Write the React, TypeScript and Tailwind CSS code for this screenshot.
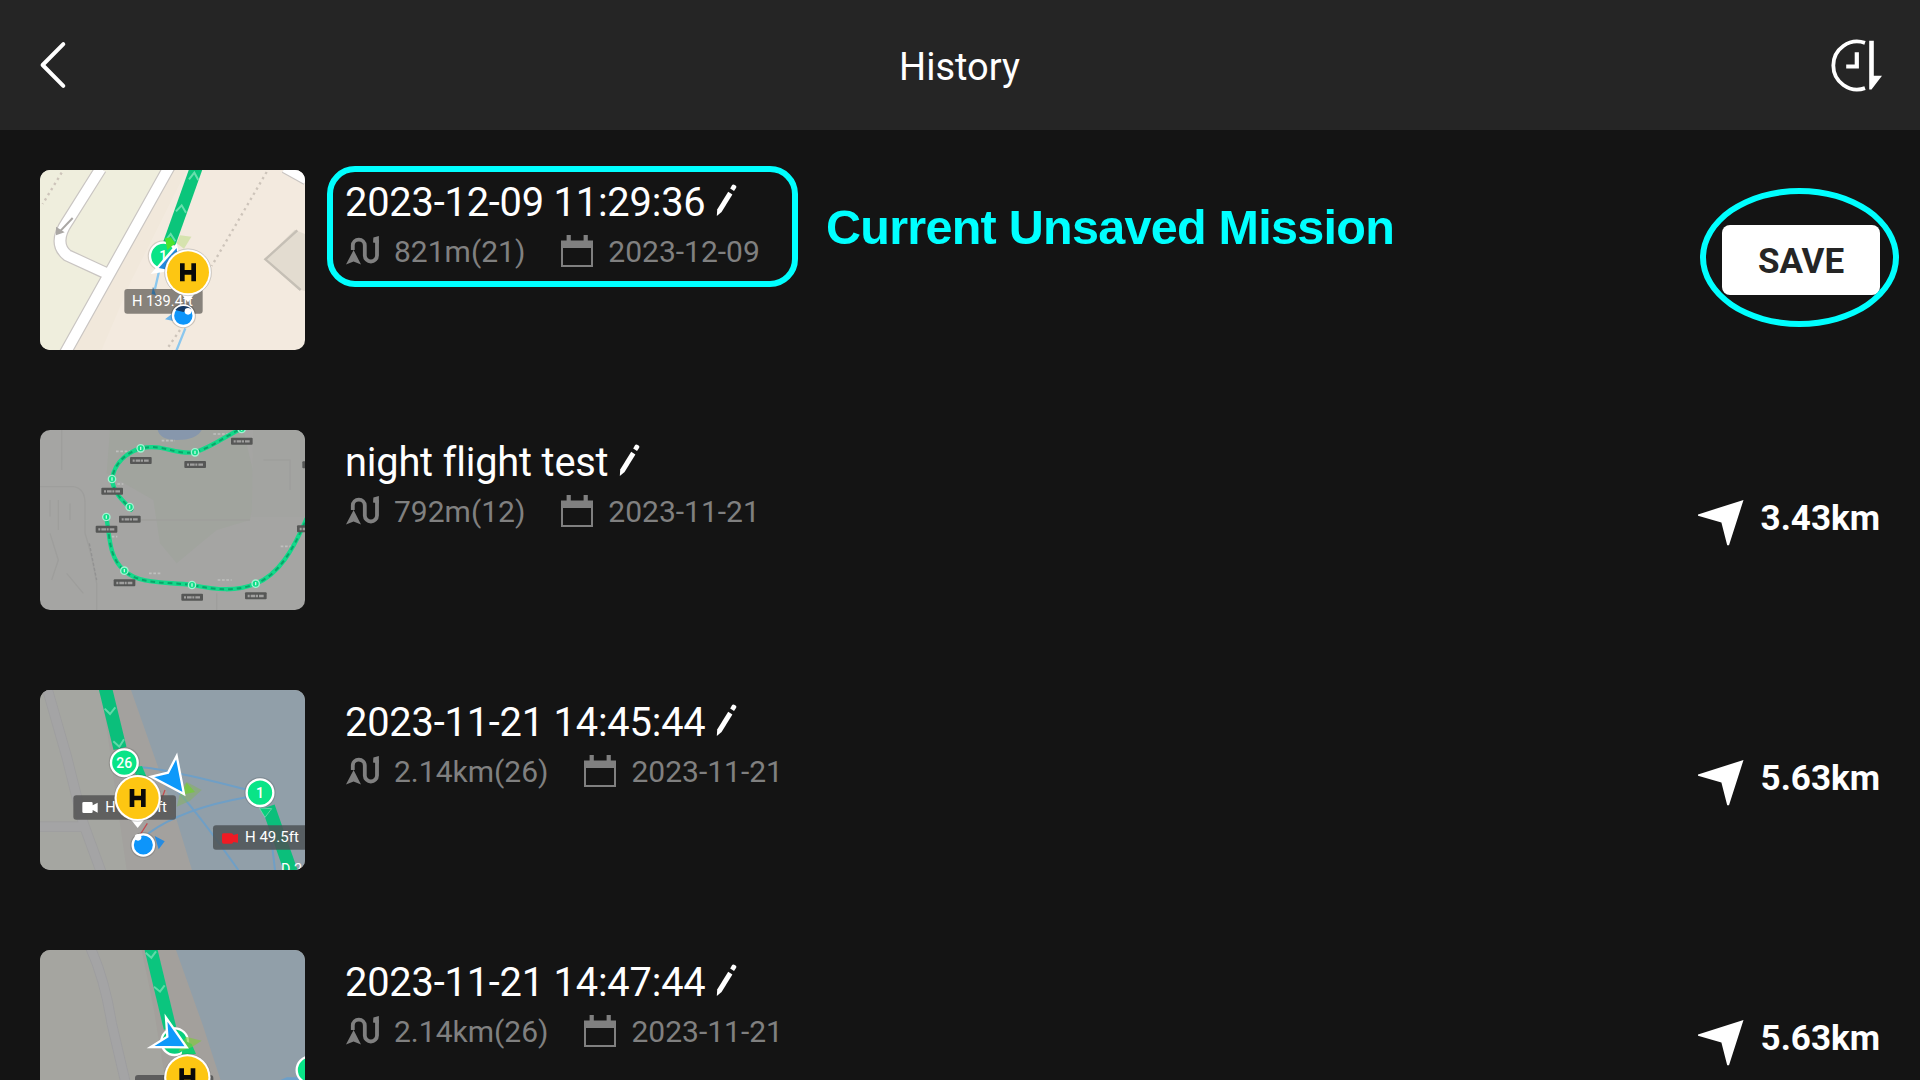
import type { ReactNode } from "react";

type Mission = {
  name: string;
  length: string;
  date: string;
  distance?: string;
  unsaved?: boolean;
  map: ReactNode;
};

function BackIcon() {
  return (
    <svg className="h-12 w-7" viewBox="0 0 28 48" fill="none">
      <path
        d="M24.3 3.2 3.6 24l20.7 20.8"
        stroke="#fff"
        strokeWidth="4"
        strokeLinecap="round"
        strokeLinejoin="round"
      />
    </svg>
  );
}

function HistorySortIcon() {
  return (
    <svg className="h-[54px] w-[52px]" viewBox="0 0 52 54" fill="none">
      <path
        d="M35 4.9A23.9 23.9 0 1 0 35 50.1"
        stroke="#fff"
        strokeWidth="3.8"
      />
      <path d="M26.8 14.3v14.2H16.2" stroke="#fff" strokeWidth="4.2" />
      <path d="M39.2 2.7h4.6v35.1h8.2L41.5 51.6h-2.3z" fill="#fff" />
    </svg>
  );
}

function PencilIcon() {
  return (
    <svg className="h-8 w-[22px]" viewBox="0 0 22 32" fill="#fff">
      <path d="M12.2 7.8 16.4 10.4 5.6 28 .8 32 1.2 25.4z" />
      <path d="M14.2 4.6 16 1.2Q16.8 0 18.2 .7L19.6 1.6Q20.8 2.5 20.2 3.8L18 6.9z" />
    </svg>
  );
}

function RouteIcon() {
  return (
    <svg className="h-[29px] w-[34px]" viewBox="0 0 34 29" fill="none">
      <path
        d="M6.8 14V9.6a6 6 0 0 1 12 0V19.4a6 6 0 0 0 12.2 0V4"
        stroke="#808080"
        strokeWidth="3.8"
      />
      <path d="M27.4 1.6 32.9 0v7.6L27 6.4z" fill="#808080" />
      <path d="M7.6 14 15 28.6 7.6 25.6 0 28.6z" fill="#808080" />
    </svg>
  );
}

function CalendarIcon() {
  return (
    <svg className="h-8 w-8" viewBox="0 0 32 32" fill="none">
      <path d="M0 5.4h5.6V0h4.2v5.4h12.8V0h4.2v5.4H32V13H0z" fill="#808080" />
      <path d="M1 12v19h30V12" stroke="#808080" strokeWidth="2" />
    </svg>
  );
}

function NavigateIcon() {
  return (
    <svg className="h-[46px] w-[46px]" viewBox="0 0 46 46" fill="#fff">
      <path d="M45.5 0 31 45.2H29.2L23.4 22.4 0 15.8V14.4z" />
    </svg>
  );
}

function Thumb({ children }: { children: ReactNode }) {
  return (
    <svg
      className="h-[180px] w-[265px] shrink-0 rounded-[10px]"
      viewBox="30 30 795 540"
      fontFamily="Roboto, sans-serif"
      fill="none"
    >
      {children}
    </svg>
  );
}

function HomePin({ x, y }: { x: number; y: number }) {
  return (
    <g>
      <path d={`M${x - 24} ${y + 60}L${x} ${y + 90}L${x + 24} ${y + 60}z`} fill="#fff" />
      <circle cx={x} cy={y} r="70" fill="#fff" stroke="#00000030" strokeWidth="3" />
      <circle cx={x} cy={y} r="63" fill="#fdc612" />
      <path
        d={`M${x - 17} ${y - 27}V${y + 27}M${x + 17} ${y - 27}V${y + 27}M${x - 17} ${y}H${x + 17}`}
        stroke="#0a0a0a"
        strokeWidth="14"
      />
    </g>
  );
}

function Waypoint({ x, y, label }: { x: number; y: number; label: string }) {
  return (
    <g>
      <circle cx={x} cy={y} r="47" fill="#0000001f" />
      <circle cx={x} cy={y} r="40" fill="#09e487" stroke="#fff" strokeWidth="7" />
      <text x={x} y={y + 15} fontSize="42" fontWeight="500" fill="#fff" textAnchor="middle">
        {label}
      </text>
    </g>
  );
}

function FirstMap() {
  return (
    <Thumb>
      <rect x="30" y="30" width="795" height="540" fill="#f3eadf" />
      <path d="M30 30H400L215 350 100 570H30z" fill="#efeedd" />
      <path d="M430 30H470L300 370 215 570H110z" fill="#f1e8db" />
      <path
        d="M212 26 112 185Q68 250 112 286L225 338M418 20 105 580M765 22 830 58"
        stroke="#c9c5c2"
        strokeWidth="38"
      />
      <path
        d="M212 26 112 185Q68 250 112 286L230 340M418 20 105 580M765 22 830 58"
        stroke="#fff"
        strokeWidth="31"
      />
      <path d="M128 174 92 212" stroke="#aaa7a4" strokeWidth="6" />
      <path d="M78 200V226L104 217z" fill="#aaa7a4" />
      <path
        d="M95 38 38 132M710 36 545 318M450 510 410 568"
        stroke="#cdc4ba"
        strokeWidth="7"
        strokeDasharray="7 11"
      />
      <path d="M704 298 794 209 825 222V393L804 388z" fill="#e3dcd0" />
      <path d="M802 211 706 298 812 390" stroke="#c5bfb5" strokeWidth="7" />
      <path d="M500 20 418 250" stroke="#0bc57b" strokeWidth="38" />
      <path
        d="M477 58 493 38 505 60M438 154 455 136 468 158M408 240 422 222 436 244"
        stroke="#68dfae"
        strokeWidth="6"
      />
      <path d="M440 250 450 226 484 230 462 266z" fill="#b9dc7e" opacity=".5" />
      <path d="M388 330 372 400M466 505 438 575" stroke="#8bc7ee" strokeWidth="7" />
      <Waypoint x={400} y={288} label="1" />
      <path d="M405 235 422 232 436 250 412 270z" fill="#4de32c" />
      <path d="M362 342 440 250 452 300 405 335z" fill="#fff" />
      <path d="M386 324 440 264 444 300 405 328z" fill="#2389dc" />
      <rect x="283" y="387" width="235" height="74" rx="9" fill="#77736d" opacity=".88" />
      <path d="M369 380 365 402 378 406z" fill="#356e9b" />
      <text x="306" y="438" fontSize="44" fill="#fff">
        H 139.4ft
      </text>
      <path d="M405 478 430 458 434 484z" fill="#67b3ec" />
      <circle cx="460" cy="467" r="38" fill="#0000002b" />
      <circle cx="460" cy="467" r="31" fill="#0d95fa" stroke="#fff" strokeWidth="7" />
      <path d="M436 450A32 32 0 0 1 484 448L460 456z" fill="#163c68" />
      <circle cx="474" cy="454" r="10" fill="#fff" />
      <HomePin x={474} y={337} />
    </Thumb>
  );
}

const NIGHT_POINTS = [
  [332, 85],
  [495, 97],
  [635, 27],
  [246, 177],
  [299, 261],
  [229, 291],
  [283, 452],
  [486, 495],
  [677, 491],
  [833, 290],
  [849, 98],
];

function NightMap() {
  return (
    <Thumb>
      <rect x="30" y="30" width="795" height="540" fill="#a5a5a3" />
      <path
        d="M240 30H640L680 200 660 300 560 330 440 430 390 370 370 240 230 160z"
        fill="#a1a49e"
      />
      <path d="M670 30H825V290H665z" fill="#a3a4a1" />
      <path d="M383 30Q390 60 440 60Q500 60 515 30z" fill="#8797ac" />
      <path
        d="M30 200H130Q165 205 165 250V340Q185 400 200 490V570M60 240V290M85 240V330M120 250V300M60 340 85 420 65 480M110 460 160 520M700 120H780V210M320 300H660M95 30V150M560 520V570"
        stroke="#9e9e9c"
        strokeWidth="4"
      />
      <path d="M178 370 200 480" stroke="#929292" strokeWidth="4" strokeDasharray="9 6" />
      <path
        d="M395 62H435M550 42H595M258 94H300M262 192H280M245 350H262M357 460H393M563 480H605M752 379H790"
        stroke="#bfc0be"
        strokeWidth="5"
        strokeDasharray="8 5"
      />
      {[
        "M308 272C270 235 250 215 246 177C255 120 300 95 332 85C400 70 430 105 495 97C550 80 590 45 650 18",
        "M229 291C240 350 235 410 283 452C330 495 410 485 486 495C560 510 620 515 677 491C745 465 790 390 830 295",
      ].map((d) => (
        <g key={d}>
          <path d={d} stroke="#14d88a" strokeWidth="13" />
          <path d={d} stroke="#07a66a" strokeWidth="6" strokeDasharray="14 12" />
        </g>
      ))}
      {NIGHT_POINTS.map(([x, y]) => (
        <g key={`${x}-${y}`}>
          <rect x={x - 32} y={y + 26} width="65" height="21" rx="3" fill="#565756" />
          <path
            d={`M${x - 24} ${y + 37}H${x + 25}`}
            stroke="#a0a09f"
            strokeWidth="7"
            strokeDasharray="6 3 14 2"
          />
          {x < 825 && (
            <>
              <circle cx={x} cy={y} r="11" fill="#12dd89" stroke="#a3f3d2" strokeWidth="4" />
              <path d={`M${x} ${y - 5}V${y + 5}`} stroke="#c6f8e3" strokeWidth="4" />
            </>
          )}
        </g>
      ))}
    </Thumb>
  );
}

function CoastMap() {
  return (
    <Thumb>
      <rect x="30" y="30" width="795" height="540" fill="#a3a19e" />
      <path d="M30 30H215L250 290 290 570H30z" fill="#a5a6a1" />
      <path d="M303 30H825V570H486L440 420z" fill="#919fa9" />
      <path
        d="M50 20 110 230 160 430 215 580M30 440H155"
        stroke="#9e9e9f"
        strokeWidth="32"
      />
      <path
        d="M50 20 110 230 160 430 215 580M30 440H155"
        stroke="#a4a4a5"
        strokeWidth="27"
      />
      <path
        d="M330 262Q400 265 645 328M355 460Q460 385 650 352M400 290Q470 350 625 570M715 400 735 570"
        stroke="#6f9fc6"
        strokeWidth="6"
      />
      <path d="M405 330 390 370M352 430 328 468" stroke="#c24c51" strokeWidth="4" />
      <path d="M440 380 455 320 470 306 515 330 480 362z" fill="#86b45c" opacity=".5" />
      <path d="M452 345 470 308 495 336z" fill="#74cf32" opacity=".7" />
      <path d="M225 20 270 205M715 380 785 580" stroke="#0bbf7b" strokeWidth="40" />
      <path
        d="M224 86 240 102 256 82M250 184 268 200 282 178"
        stroke="#62d8a9"
        strokeWidth="6"
      />
      <path d="M312 262 336 258 350 292 320 296z" fill="#0cc87e" />
      <Waypoint x={283} y={248} label="26" />
      <path d="M688 384 725 386 705 412z" fill="#09cf7c" stroke="#91dbbc" strokeWidth="2" />
      <Waypoint x={690} y={338} label="1" />
      <path
        d="M440 228 462 342 364 290 414 278z"
        fill="#0d99fa"
        stroke="#fff"
        strokeWidth="7"
      />
      <rect x="130" y="346" width="308" height="73" rx="9" fill="#545454" opacity=".85" />
      <path
        d="M157 370Q157 366 161 366H184Q188 366 188 370V376L203 368V398L188 390V395Q188 399 184 399H161Q157 399 157 395z"
        fill="#fff"
      />
      <text x="226" y="396" fontSize="44" fill="#fff">
        H
      </text>
      <text x="381" y="396" fontSize="44" fill="#fff">
        ft
      </text>
      <path d="M374 468 404 484 386 508z" fill="#268be0" />
      <circle cx="340" cy="495" r="39" fill="#00000020" />
      <circle cx="340" cy="495" r="32" fill="#0d95fa" stroke="#fff" strokeWidth="7" />
      <circle cx="324" cy="472" r="10" fill="#fff" />
      <HomePin x={323} y={354} />
      <rect x="549" y="436" width="290" height="73" rx="9" fill="#4c5256" opacity=".85" />
      <path
        d="M576 464Q576 460 581 460H604Q609 460 610 465L624 461V488L610 486Q609 491 604 491H581Q576 491 576 486z"
        fill="#ef1b24"
      />
      <text x="645" y="486" fontSize="45" fill="#fff">
        H 49.5ft
      </text>
      <text x="753" y="581" fontSize="43" fill="#fff">
        D 2
      </text>
    </Thumb>
  );
}

function CoastReturnMap() {
  return (
    <Thumb>
      <rect x="30" y="30" width="795" height="540" fill="#a3a09c" />
      <path d="M30 30H335L370 200 430 570H30z" fill="#a5a5a0" />
      <path d="M438 30H825V570H620L520 260z" fill="#919fa9" />
      <path d="M180 20Q225 120 245 250L320 570" stroke="#9d9d9f" strokeWidth="31" />
      <path d="M180 20Q225 120 245 250L320 570" stroke="#a4a4a5" strokeWidth="26" />
      <path d="M740 425 770 412H830V450H730z" fill="#6c9fc9" />
      <path d="M361 20 420 265" stroke="#0bc57e" strokeWidth="38" />
      <path
        d="M347 38 364 53 378 34M372 140 390 155 404 136"
        stroke="#62d8a9"
        strokeWidth="6"
      />
      <circle cx="434" cy="305" r="40" fill="#09cf7c" stroke="#fff" strokeWidth="7" />
      <path d="M460 300 485 312 498 342 455 345z" fill="#12cf70" />
      <path d="M445 335 468 290 515 302 485 322z" fill="#80c93d" opacity=".65" />
      <path
        d="M408 233 470 322 362 321 412 290z"
        fill="#0d99fa"
        stroke="#fff"
        strokeWidth="7"
      />
      <rect x="315" y="405" width="235" height="73" rx="9" fill="#555555" opacity=".9" />
      <HomePin x={472} y={412} />
      <circle cx="840" cy="390" r="40" fill="#09e487" stroke="#fff" strokeWidth="7" />
    </Thumb>
  );
}

const MISSIONS: Mission[] = [
  {
    name: "2023-12-09 11:29:36",
    length: "821m(21)",
    date: "2023-12-09",
    unsaved: true,
    map: <FirstMap />,
  },
  {
    name: "night flight test",
    length: "792m(12)",
    date: "2023-11-21",
    distance: "3.43km",
    map: <NightMap />,
  },
  {
    name: "2023-11-21 14:45:44",
    length: "2.14km(26)",
    date: "2023-11-21",
    distance: "5.63km",
    map: <CoastMap />,
  },
  {
    name: "2023-11-21 14:47:44",
    length: "2.14km(26)",
    date: "2023-11-21",
    distance: "5.63km",
    map: <CoastReturnMap />,
  },
];

function MissionRow({ mission }: { mission: Mission }) {
  return (
    <li className="relative flex h-[180px] shrink-0 items-start gap-10">
      {mission.map}
      <div className="flex flex-col">
        <div className="mt-2.5 flex h-[46px] items-start gap-[11px]">
          <h2 className="text-[39.8px] leading-[46px] tracking-[-0.2px] whitespace-nowrap text-white">
            {mission.name}
          </h2>
          <span className="mt-1">
            <PencilIcon />
          </span>
        </div>
        <div className="mt-2 flex h-9 items-start pl-px text-[30px] leading-9 whitespace-nowrap text-[#808080]">
          <span className="mt-0.5">
            <RouteIcon />
          </span>
          <span className="ml-3.5">{mission.length}</span>
          <span className="mt-px ml-9">
            <CalendarIcon />
          </span>
          <span className="ml-[15px]">{mission.date}</span>
        </div>
      </div>
      {mission.unsaved ? (
        <button className="mt-[55px] ml-auto h-[70px] w-[158px] rounded-lg bg-white pt-1 text-[35px] font-bold text-[#252525]">
          SAVE
        </button>
      ) : (
        <div className="mt-[68px] ml-auto flex items-start gap-[17px]">
          <span className="mt-0.5">
            <NavigateIcon />
          </span>
          <span className="text-[35px] leading-[42px] font-bold text-white">
            {mission.distance}
          </span>
        </div>
      )}
      {mission.unsaved && (
        <>
          <div className="absolute top-[-4px] left-[287px] h-[121px] w-[471px] rounded-[28px] border-6 border-[#00ffff]" />
          <p className="absolute top-[28px] left-[786px] font-['Liberation_Sans',sans-serif] text-[48.5px] leading-[58px] font-bold tracking-[-0.73px] whitespace-nowrap text-[#00ffff]">
            Current Unsaved Mission
          </p>
          <div className="absolute top-[18px] left-[1660px] h-[139px] w-[199px] rounded-[50%] border-6 border-[#00ffff]" />
        </>
      )}
    </li>
  );
}

function App() {
  return (
    <div className="flex h-screen w-full flex-col overflow-hidden bg-[#141414] font-[Roboto,sans-serif]">
      <header className="flex h-[130px] shrink-0 items-center justify-between bg-[#252525] pr-[38px] pl-[39px]">
        <button className="w-[52px]">
          <BackIcon />
        </button>
        <h1 className="mr-0.5 pt-1 text-[38px] leading-[46px] text-white">History</h1>
        <button>
          <HistorySortIcon />
        </button>
      </header>
      <ul className="flex min-h-0 flex-1 flex-col gap-20 overflow-hidden px-10 pt-10">
        {MISSIONS.map((mission) => (
          <MissionRow key={mission.name} mission={mission} />
        ))}
      </ul>
    </div>
  );
}

export default App;
